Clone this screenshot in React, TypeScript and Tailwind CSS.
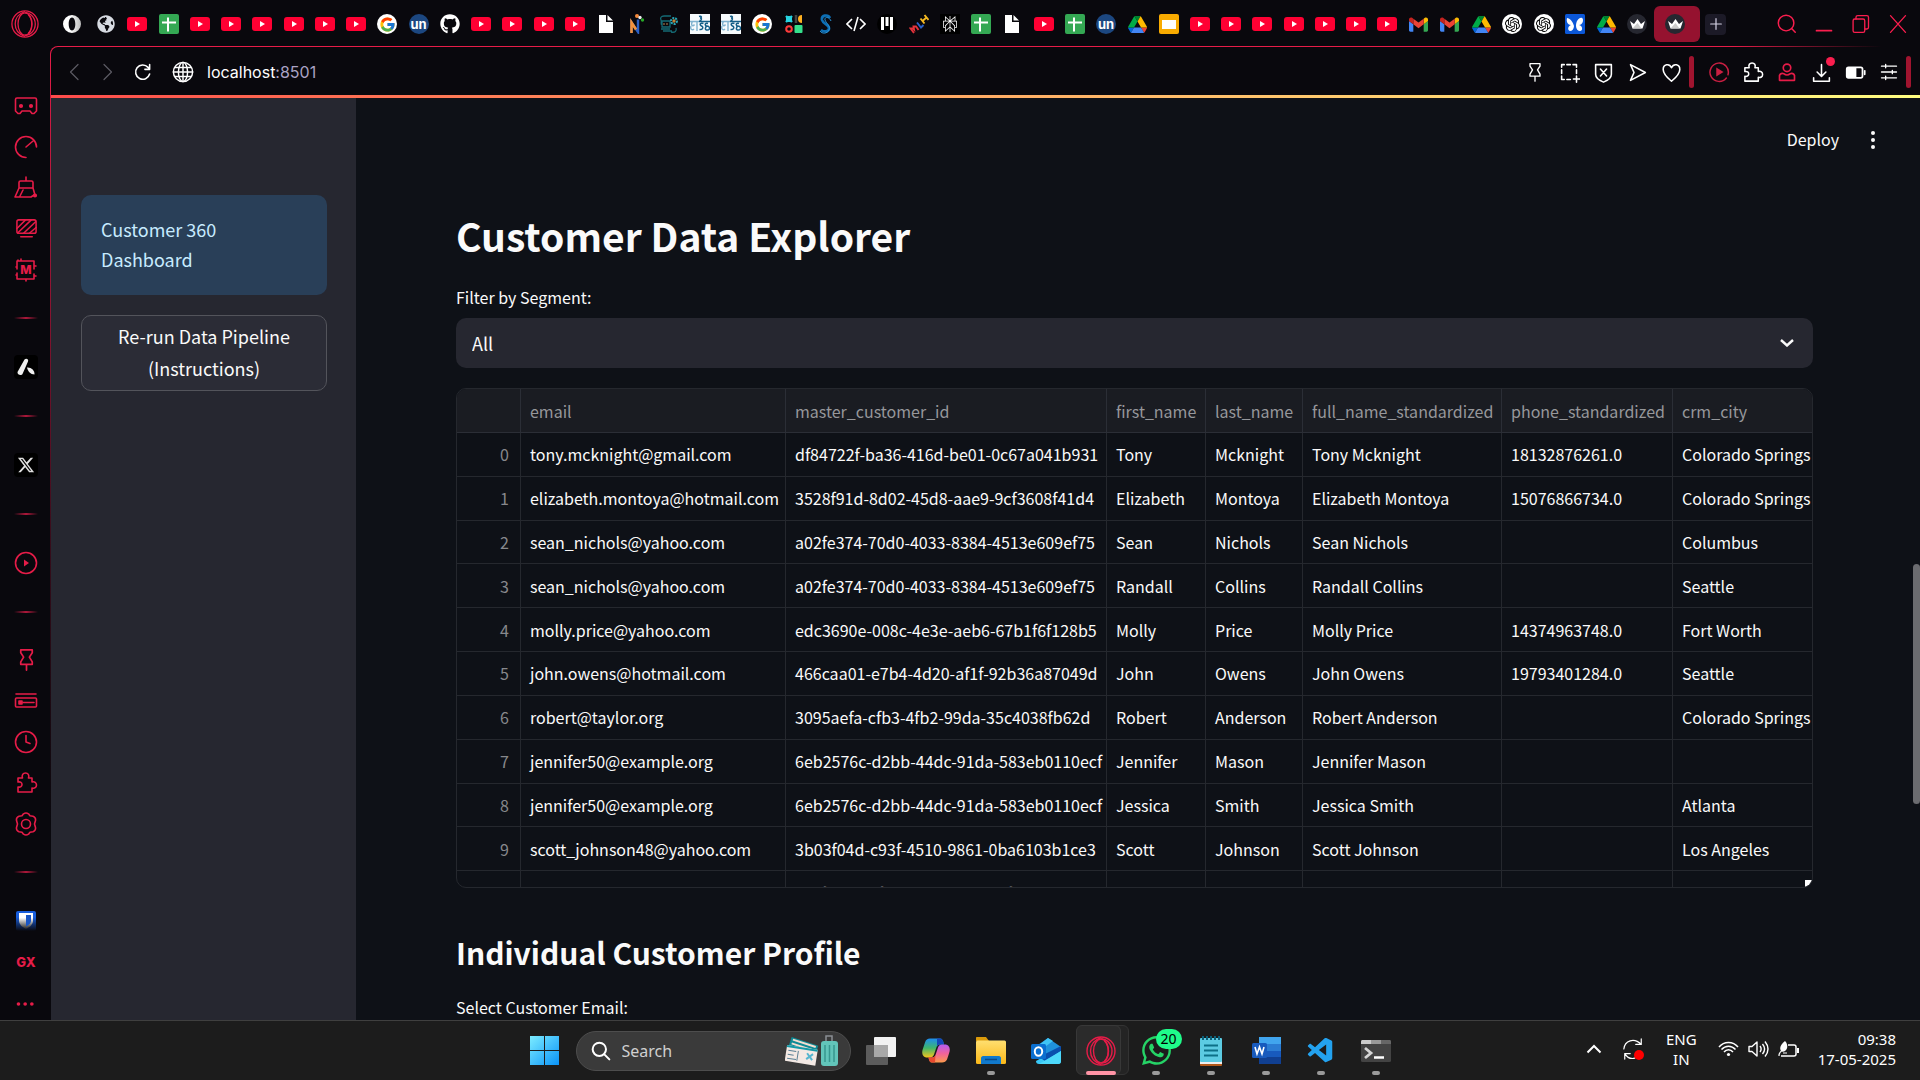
import React from "react";
import { FcGoogle } from "react-icons/fc";
import { FaGithub, FaGlobeAmericas, FaWhatsapp } from "react-icons/fa";
import { FaXTwitter } from "react-icons/fa6";
import { SiOpenai, SiPerplexity } from "react-icons/si";
import { VscVscode } from "react-icons/vsc";

type Kids = { children?: React.ReactNode };

/* ---------- drawing helpers ---------- */

function Line({ size = 22, w = 1.6, children }: Kids & { size?: number; w?: number }) {
  return (
    <svg width={size} height={size} viewBox="0 0 24 24" fill="none" stroke="currentColor" strokeWidth={w} strokeLinejoin="round" strokeLinecap="round" aria-hidden="true">
      {children}
    </svg>
  );
}

function OperaRing({ size }: { size: number }) {
  return (
    <svg width={size} height={size} viewBox="0 0 30 30" fill="none" stroke="#e61c48" strokeWidth="1.4" aria-hidden="true">
      <circle cx="15" cy="15" r="14" />
      <ellipse cx="15" cy="15" rx="7.5" ry="12" />
      <path d="M15 1.6C8 4 4.500 9 4.500 15S8 26 15 28.400" />
      <path d="M18.500 5c5 4.500 5 15.500 0 20" />
      <path d="M15 3c4-1 11 4 11 12s-7 13-11 12" />
    </svg>
  );
}

/* ---------- favicons ---------- */

function YouTube() {
  return (
    <svg width="20" height="14" viewBox="0 0 20 14" aria-hidden="true">
      <rect width="20" height="14" rx="3" fill="#ff0033" />
      <path d="M8 4l5 3-5 3z" fill="#fff" />
    </svg>
  );
}

function Sheets() {
  return (
    <svg width="20" height="20" viewBox="0 0 20 20" aria-hidden="true">
      <rect width="20" height="20" rx="2" fill="#34a853" />
      <path d="M3 8.500h14M9 3.500v14" stroke="#fff" strokeWidth="2" />
    </svg>
  );
}

function Google() {
  return (
    <span className="flex size-5 items-center justify-center rounded-full bg-white">
      <FcGoogle size={17} />
    </span>
  );
}

function Un() {
  return (
    <span className="flex size-5 items-center justify-center rounded-full bg-[#1c4780] font-[Inter,sans-serif] text-[13px] leading-4 font-bold text-white">
      un
    </span>
  );
}

function Doc() {
  return (
    <svg width="14" height="18" viewBox="0 0 14 18" fill="#fff" aria-hidden="true">
      <path d="M0 0h7v7h7v11H0zM8.500 0L14 5.500H8.500z" />
    </svg>
  );
}

function Drive() {
  return (
    <svg width="19" height="17" viewBox="0 0 87 78" aria-hidden="true">
      <path d="M6.600 66.850l3.850 6.650c.8 1.400 1.950 2.500 3.300 3.300L27.500 53H0c0 1.550.4 3.100 1.200 4.500z" fill="#0066da" />
      <path d="M43.650 25L29.900 1.200c-1.350.8-2.500 1.900-3.300 3.300l-25.400 44A9 9 0 0 0 0 53h27.500z" fill="#00ac47" />
      <path d="M73.550 76.800c1.350-.8 2.500-1.900 3.300-3.300l1.600-2.750L86.100 57.500c.8-1.400 1.200-2.950 1.200-4.500H59.800l5.850 11.500z" fill="#ea4335" />
      <path d="M43.650 25L57.400 1.200C56.050.4 54.500 0 52.900 0H34.400c-1.600 0-3.150.45-4.500 1.200z" fill="#00832d" />
      <path d="M59.800 53H27.500L13.750 76.800c1.350.8 2.900 1.200 4.500 1.200h50.800c1.600 0 3.150-.45 4.500-1.200z" fill="#4285f4" />
      <path d="M73.400 26.500l-12.700-22c-.8-1.400-1.950-2.500-3.300-3.300L43.650 25 59.800 53h27.450c0-1.550-.4-3.100-1.200-4.500z" fill="#ffba00" />
    </svg>
  );
}

function Gmail() {
  return (
    <svg width="19" height="15" viewBox="52 42 88 66" aria-hidden="true">
      <path fill="#4285f4" d="M58 108h14V74L52 59v43c0 3.300 2.700 6 6 6" />
      <path fill="#34a853" d="M120 108h14c3.300 0 6-2.700 6-6V59l-20 15" />
      <path fill="#fbbc04" d="M120 48v26l20-15v-8c0-7.400-8.500-11.600-14.400-7.200" />
      <path fill="#ea4335" d="M72 74V48l24 18 24-18v26L96 92" />
      <path fill="#c5221f" d="M52 51v8l20 15V48l-5.600-4.200C60.500 39.400 52 43.600 52 51" />
    </svg>
  );
}

function Slides() {
  return (
    <svg width="20" height="20" viewBox="0 0 20 20" aria-hidden="true">
      <rect width="20" height="20" rx="2" fill="#f9ab00" />
      <rect x="3" y="6" width="14" height="9" fill="#fff" />
    </svg>
  );
}

function OperaO() {
  return (
    <svg width="18" height="18" viewBox="0 0 18 18" aria-hidden="true">
      <defs>
        <linearGradient id="oo" x1="0" x2="1">
          <stop offset=".4" stopColor="#fff" />
          <stop offset="1" stopColor="#bbb" />
        </linearGradient>
      </defs>
      <path fillRule="evenodd" fill="url(#oo)" d="M9 0a9 9 0 1 0 0 18A9 9 0 0 0 9 0zm0 2.500c2.200 0 3.300 3 3.300 6.500s-1.100 6.500-3.300 6.500S5.700 12.500 5.700 9 6.800 2.500 9 2.500z" />
    </svg>
  );
}

function NLogo() {
  return (
    <svg width="16" height="20" viewBox="0 0 16 20" aria-hidden="true">
      <path d="M2.500 19V8.500L9 18V5.500" stroke="#2a5fc4" strokeWidth="2.400" fill="none" />
      <path d="M2.500 19V8.500l4.500 7" stroke="#f2923c" strokeWidth="2.600" fill="none" />
      <circle cx="8" cy="2" r="2" fill="#f58a3c" />
      <circle cx="11" cy="3.500" r="1.700" fill="#eee" />
      <circle cx="13.500" cy="6" r="1.700" fill="#27a827" />
    </svg>
  );
}

function Robot() {
  return (
    <svg width="20" height="20" viewBox="0 0 20 20" fill="none" stroke="#156a74" strokeWidth="1.300" aria-hidden="true">
      <path d="M12 2H5C2 2 1 4 2 6s-1 4 1 5M3 7h8v6H3zM2 15h9M4 17h9M12 18c4 1 6-1 5-4" />
      <circle cx="15" cy="7" r="3" stroke="#28a8b8" strokeDasharray="2 1" strokeWidth="2" />
      <circle cx="15" cy="7" r="1" stroke="#c98b3d" />
      <path d="M5 9v2M8 9v2" stroke="#8b6b45" />
    </svg>
  );
}

function SeDha() {
  return (
    <svg width="20" height="20" viewBox="0 0 20 20" fill="none" aria-hidden="true">
      <rect width="20" height="20" fill="#f6fafc" />
      <path d="M0 7.500h9M2.500 7.500c-2 3 0 6 2 3M7 7.500V17M1 12c-1 3 1 5 3 3" stroke="#7fb2cf" strokeWidth="1.400" />
      <path d="M9 7.500h11M13.500 9.500c-3-1-4.500 1-2 2.500 2.500 1 1 4-2 3.500M18 9.500c-3.500-1-3.500 2.500-1 2.500M17 12c3 0 3.500 4 .5 4s-2.500-3-.5-4M9 2.500c3-1 3 1.500 1 1.500 2 0 2 2.500-.5 2.500" stroke="#155f88" strokeWidth="1.500" />
    </svg>
  );
}

function Shapes() {
  return (
    <svg width="18" height="18" viewBox="0 0 18 18" aria-hidden="true">
      <path d="M1 1l6 6M7 1L1 7M4 1v6M1 4h6" stroke="#27d3e0" strokeWidth="2.400" />
      <path d="M11 0v8" stroke="#444" strokeWidth="2.500" />
      <path d="M17 0a4 4 0 0 0 0 8z" fill="#ffb020" />
      <circle cx="4" cy="14" r="2.800" fill="none" stroke="#ff3b3b" strokeWidth="2" />
      <rect x="9.500" y="10" width="8" height="8" rx="1" fill="#35e08c" />
    </svg>
  );
}

function SLogo() {
  return (
    <svg width="16" height="20" viewBox="0 0 16 20" fill="none" stroke="#0d6fb5" aria-hidden="true">
      <path d="M13 4C11 0 4 1 5 6c1 4 8 5 7 9-1 3-5 3-8 1" strokeWidth="2.600" />
      <path d="M14 7C12 2 7 3 8 6c1 3 6 6 4 10-2 4-7 4-9 1" strokeWidth="1" stroke="#2b93d6" />
    </svg>
  );
}

function Code() {
  return (
    <svg width="20" height="16" viewBox="0 0 20 16" fill="none" stroke="#fff" strokeWidth="1.600" aria-hidden="true">
      <path d="M6 3L1 8l5 5M14 3l5 5-5 5M12 1L8 15" />
    </svg>
  );
}

function Bars() {
  return (
    <span className="flex size-5 items-center justify-center rounded-full bg-black">
      <svg width="12" height="14" viewBox="0 0 12 14" fill="#fff" aria-hidden="true">
        <path d="M0 0h3v13H0zM4.500 0h3v9h-3zM9 0h3v13H9z" />
      </svg>
    </span>
  );
}

function Mlh() {
  return (
    <svg width="20" height="20" viewBox="0 0 20 20" fill="none" strokeWidth="1.900" aria-hidden="true">
      <path d="M5 19l-3.500-4.500L4 14.500l1 1-.5-3 2.500 0 2.500 3.500" stroke="#e5323b" />
      <path d="M8 8.500l4 5 2.500-2.500" stroke="#2a62c9" />
      <path d="M11.500 4.500l4 5M15.500 1l4 5M13.500 7l4-3.500" stroke="#f5b921" />
    </svg>
  );
}

function Perplexity() {
  return (
    <span className="flex size-5 items-center justify-center bg-black text-white">
      <SiPerplexity size={16} />
    </span>
  );
}

function OpenAi() {
  return (
    <span className="flex size-5 items-center justify-center rounded-full bg-white text-black">
      <SiOpenai size={15} />
    </span>
  );
}

function Butterfly() {
  return (
    <svg width="20" height="20" viewBox="0 0 20 20" aria-hidden="true">
      <rect width="20" height="20" rx="1.500" fill="#0b57d8" />
      <path d="M9 12C8 8 5 4 2 4c-1 4 1 7 4 7-3 1-4 5-1 6 2 0 4-2 4-5zM11 12c0-5 3-9 6-8 2 1 1 7-3 7 4 1 4 6 1 6-2 0-4-2-4-5z" fill="#fff" />
    </svg>
  );
}

function Crown() {
  return (
    <span className="flex size-5 items-center justify-center rounded-full bg-[#262730]">
      <svg width="15" height="10" viewBox="0 0 15 10" aria-hidden="true">
        <path d="M0 2l4 3 3.500-5L11 5l4-3-2.500 7.500h-10z" fill="#fff" />
        <path d="M7.500 4l4 5.500h-9z" fill="#ccc" />
      </svg>
    </span>
  );
}

const favicons: Record<string, () => React.ReactElement> = {
  y: YouTube,
  s: Sheets,
  g: Google,
  u: Un,
  d: Doc,
  D: Drive,
  m: Gmail,
  l: Slides,
  G: () => <FaGlobeAmericas size={18} color="#d7dbe2" />,
  h: () => <FaGithub size={20} color="#fff" />,
  n: NLogo,
  r: Robot,
  e: SeDha,
  k: Shapes,
  S: SLogo,
  c: Code,
  b: Bars,
  M: Mlh,
  p: Perplexity,
  o: OpenAi,
  B: Butterfly,
  C: Crown,
};

const tabOrder = "GysyyyyyyguhyyyydnreegkScbMpsdysuDlyyyyyyymmDooBDC";

function TabBar() {
  return (
    <header className="flex h-[46px] shrink-0 items-center pt-0.5 text-[#fa1e4e]">
      <button aria-label="Opera menu" className="flex w-[50px] justify-center">
        <OperaRing size={28} />
      </button>
      <nav aria-label="Tabs" className="flex min-w-0 flex-1 items-center pl-3">
        <button aria-label="Start page" className="flex w-5 justify-center">
          <OperaO />
        </button>
        <div className="ml-[14px] flex min-w-0 flex-1 items-center justify-between">
          {tabOrder.split("").map((k, i) => {
            const Icon = favicons[k];
            return (
              <button key={i} aria-label={`Tab ${i + 1}`} className="flex h-9 w-5 items-center justify-center">
                <Icon />
              </button>
            );
          })}
        </div>
        <button aria-label="Active tab" className="ml-[6px] flex h-9 w-[46px] items-center rounded-md bg-[#95122f] pl-[11px]">
          <Crown />
        </button>
        <button aria-label="New tab" className="ml-[5px] flex h-[21px] w-[21px] items-center justify-center rounded bg-[#1c1a27] text-[#d6d3e6]">
          <Line size={16} w={1.8}><path d="M12 4v16M4 12h16" /></Line>
        </button>
      </nav>
      <div className="ml-[43px] flex items-center pr-1">
        <button aria-label="Search tabs" className="flex w-[36px] justify-center"><Line size={22}><circle cx="11" cy="11" r="8.500" /><path d="M17 17l4 4" /></Line></button>
        <button aria-label="Minimise" className="flex w-[37px] justify-center"><Line size={20} w={2}><path d="M3 20h18" /></Line></button>
        <button aria-label="Restore" className="flex w-[37px] justify-center"><Line size={20}><rect x="2.500" y="6" width="14" height="16" rx="2" /><path d="M6 6V4c0-1 1-2 2-2h11c1 0 2 1 2 2v12c0 1-1 2-2 2h-2" /></Line></button>
        <button aria-label="Close" className="flex w-[37px] justify-center"><Line size={20}><path d="M3 2l18 20M21 2L3 22" /></Line></button>
      </div>
    </header>
  );
}

const puzzle = "M4 7h4.500c-1-3 .5-5 3-5s4 2 3 5H18v4c2.500-.8 4.500.6 4.500 3s-2 3.800-4.500 3v4H4v-5c2.500.6 4-.8 4-2.500S6.500 10.500 4 11z";
const pin = "M6 2h12v3l-3 4.500 3 5V17H6v-2.500l3-5L6 5zM12 17v6";

function ToolBar() {
  const cell = "flex w-[34px] justify-center";
  return (
    <div className="flex h-12 shrink-0 items-center pt-0.5">
      <div className="flex items-center pl-2 text-[#5c5a63]">
        <button aria-label="Back" className="flex w-8 justify-center"><Line size={18}><path d="M16 2L6 12l10 10" /></Line></button>
        <button aria-label="Forward" className="flex w-8 justify-center"><Line size={18}><path d="M8 2l10 10L8 22" /></Line></button>
        <button aria-label="Reload" className="flex w-[38px] justify-center text-white"><Line size={19} w={2}><path d="M21 14a9 9 0 1 1-2-8.500L21 8M21 2v6h-6" /></Line></button>
      </div>
      <div className="flex min-w-0 flex-1 items-center">
        <button aria-label="Site information" className="ml-[11px] text-white">
          <Line size={22} w={1.600}><circle cx="12" cy="12" r="10.500" /><ellipse cx="12" cy="12" rx="5" ry="10.500" /><path d="M12 1.500v21M1.500 12h21M3 7h18M3 17h18" /></Line>
        </button>
        <a href="http://localhost:8501" className="ml-[13px] font-[Inter,sans-serif] text-base leading-6 text-white">
          localhost<span className="text-[#aaa2c4]">:8501</span>
        </a>
      </div>
      <div className="flex items-center text-white">
        <button aria-label="Pin" className={cell}><Line size={20}><path d={pin} /></Line></button>
        <button aria-label="Snapshot" className={cell}><Line size={21} w={1.800}><path d="M3 6V3h3M9 3h4M16 3h4v3M20 9v4M3 9v4M3 16v4h3M9 20h4M20 16v7M16.500 19.500h7" /></Line></button>
        <button aria-label="Shield" className={cell}><Line size={21} w={1.800}><path d="M3 3h18v11c0 4-4 7-9 9-5-2-9-5-9-9zM8.500 8l7 8M15.500 8l-7 8" /></Line></button>
        <button aria-label="Send" className={cell}><Line size={21} w={1.800}><path d="M4 3l17 9L4 21l4-9z" /></Line></button>
        <button aria-label="Favourite" className={cell}><Line size={21} w={1.800}><path d="M12 22C6 17 2.500 13.500 2.500 8.500 2.500 2.500 9.500 1 12 6.500 14.500 1 21.500 2.500 21.500 8.500 21.500 13.500 18 17 12 22z" /></Line></button>
        <span className="ml-px h-8 w-[5px] rounded-full bg-[#a0142f]" />
        <div className="ml-2 flex items-center">
          <button aria-label="Player" className={`${cell} text-[#c91f42]`}><Line size={22}><path d="M20 18.500a10 10 0 1 1 1.800-3.500" /><path d="M9 7l8 5-8 5z" fill="currentColor" stroke="none" /></Line></button>
          <button aria-label="Extensions" className={cell}><Line size={23}><path d={puzzle} transform="translate(-1)" /></Line></button>
          <button aria-label="Profile" className={`${cell} text-[#e61c48]`}><Line size={20} w={2}><circle cx="12" cy="7" r="4.500" /><path d="M3 22v-6c1-2 3-3 5-2 2.500 2 5.500 2 8 0 2-1 4 0 5 2v6z" /></Line></button>
          <button aria-label="Downloads" className={`${cell} relative`}>
            <Line size={21} w={1.800}><path d="M12 3v13M7 11.500l5 5 5-5M3 18v4h18v-4" /></Line>
            <span className="absolute -top-[5px] right-[3px] size-[9px] rounded-full bg-[#fa1e4e]" />
          </button>
          <button aria-label="Battery saver" className={cell}><Line size={21} w={2}><rect x="2" y="6" width="18" height="12" rx="2" /><path d="M3 7h9v10H3z" fill="currentColor" /><path d="M22.500 10v4" /></Line></button>
          <button aria-label="Easy setup" className={cell}><Line size={20} w={1.600}><path d="M3 5h18M3 12h18M3 19h18M8 3v4M16 10v4M8 17v4" /></Line></button>
        </div>
        <span className="h-8 w-[5px] rounded-full bg-[#a0142f]" />
        <span className="w-[9px]" />
      </div>
    </div>
  );
}

function RailButton({ label, tall, children }: Kids & { label: string; tall?: boolean }) {
  return (
    <button aria-label={label} className={`flex w-full shrink-0 items-center justify-center pl-[2px] ${tall ? "h-[43px]" : "h-[41px]"}`}>
      {children}
    </button>
  );
}

function RailRule() {
  return (
    <div className="flex h-[55px] w-full shrink-0 items-center justify-center pl-[2px]">
      <span className="h-0.5 w-6 bg-linear-to-r from-transparent via-[#b0183b] to-transparent" />
    </div>
  );
}

function Rail() {
  return (
    <aside aria-label="Browser sidebar" className="flex w-[50px] shrink-0 flex-col items-center pt-[39px] text-[#e61c48]">
      <RailButton label="Mods"><Line size={24}><path d="M1.500 5.500c0-1 .5-1.500 1.500-1.500h18c1 0 1.500.5 1.500 1.500V17l-2.500 2.500h-2L16 17H8l-2 2.500H4L1.500 17z" /><circle cx="7" cy="12" r="1.300" fill="currentColor" /><circle cx="17" cy="12" r="1.300" fill="currentColor" /></Line></RailButton>
      <RailButton label="Speed"><Line size={24}><path d="M12 22.500A10.500 10.500 0 1 1 22.500 12M12 12l7-6" /></Line></RailButton>
      <RailButton label="Cleaner"><Line size={24}><path d="M12 1v4M5 12V6.500C5 5.500 5.500 5 6.500 5h11c1 0 1.500.5 1.500 1.500V12M5 12h14l2 7M5 12L1 21h16l3-2M9 14l-3 6" /><circle cx="21" cy="19.500" r="1.300" fill="currentColor" /></Line></RailButton>
      <RailButton label="Shaders"><Line size={23}><rect x="2" y="3" width="20" height="14" rx="2" /><path d="M2 12l9-9M3 16.500L17 3M9 17L21.500 5M15 17l7-6M6 20.500h12" /></Line></RailButton>
      <RailButton label="Messenger">
        <span className="relative flex items-center justify-center">
          <Line size={24}><path d="M4 2v1h16v8M20 16v5H3V15M3 11V3M7 3V1M12 21v2M2 9h1M2 17h1M20 8h2M20 18h2" /></Line>
          <span className="absolute font-[Inter,sans-serif] text-xs font-extrabold">M</span>
        </span>
      </RailButton>
      <RailRule />
      <RailButton label="Aria" tall>
        <span className="flex size-6 items-center justify-center rounded bg-black">
          <svg width="18" height="18" viewBox="0 0 18 18" fill="#f0f0f0" aria-hidden="true"><path d="M7.500 1.500c1.500-1.500 4.500-.5 3.500 2L5.500 16C4.500 18 0 17 .5 14zM10 9.500c4-.5 8 3 7.500 7-4 0-6.500-3-7.500-7z" /></svg>
        </span>
      </RailButton>
      <RailRule />
      <RailButton label="X" tall>
        <span className="flex size-6 items-center justify-center rounded bg-black text-[#e0e0e0]"><FaXTwitter size={18} /></span>
      </RailButton>
      <RailRule />
      <RailButton label="Player" tall><Line size={24}><circle cx="12" cy="12" r="10.500" /><path d="M10 8.500l5 3.500-5 3.500z" fill="currentColor" stroke="none" /></Line></RailButton>
      <RailRule />
      <RailButton label="Pinboards"><Line size={23} w={1.800}><path d={pin} /></Line></RailButton>
      <RailButton label="Tab islands"><Line size={24}><rect x="1.500" y="9" width="21" height="9" rx="1" /><path d="M2 5h20M9 13.500h11" /><path d="M5 12h3v3H5z" fill="currentColor" /></Line></RailButton>
      <RailButton label="History"><Line size={24}><circle cx="12" cy="12" r="10.500" /><path d="M12 5.500V12l4 1.500" /></Line></RailButton>
      <RailButton label="Extensions"><Line size={24}><path d={puzzle} /></Line></RailButton>
      <RailButton label="Settings"><Line size={24}><circle cx="12" cy="12" r="4.500" /><path d="M9.500 1.800c1.500-1 3.500-1 5 0l1.500 2 3 .4c2 .8 2.800 2.300 2.500 4.300L20.500 12l1 3.500c.3 2-.5 3.500-2.500 4.300l-3 .4-1.500 2c-1.500 1-3.500 1-5 0l-1.500-2-3-.4c-2-.8-2.800-2.300-2.500-4.300l1-3.500-1-3.500C2.200 6.500 3 5 5 4.200l3-.4z" /></Line></RailButton>
      <RailRule />
      <RailButton label="Bitwarden" tall>
        <svg width="20" height="20" viewBox="0 0 20 20" aria-hidden="true">
          <defs>
            <linearGradient id="bw" x1="0" y1="0" x2="0" y2="1"><stop offset=".3" stopColor="#175ddc" /><stop offset="1" stopColor="#09080d" /></linearGradient>
            <linearGradient id="bs" x1="0" y1="0" x2="0" y2="1"><stop offset=".3" stopColor="#fff" /><stop offset="1" stopColor="#222" /></linearGradient>
          </defs>
          <rect width="20" height="20" rx="2" fill="url(#bw)" />
          <path d="M3 2h14v8c0 3-3 6-7 8-4-2-7-5-7-8z" fill="url(#bs)" />
          <path d="M10 4h5v6c0 2-2 4-5 5.500z" fill="#1a56c4" />
        </svg>
      </RailButton>
      <RailButton label="GX Corner"><span className="font-[Inter,sans-serif] text-[13px] font-extrabold">GX</span></RailButton>
      <RailButton label="More"><Line size={20} w={0}><g fill="currentColor"><circle cx="3" cy="12" r="2.200" /><circle cx="11" cy="12" r="2.200" /><circle cx="19" cy="12" r="2.200" /></g></Line></RailButton>
    </aside>
  );
}

/* ---------- Streamlit page ---------- */

const columns = [
  { name: "email", w: "w-[265px]" },
  { name: "master_customer_id", w: "w-[321px]" },
  { name: "first_name", w: "w-[99px]" },
  { name: "last_name", w: "w-[97px]" },
  { name: "full_name_standardized", w: "w-[199px]" },
  { name: "phone_standardized", w: "w-[171px]" },
  { name: "crm_city", w: "w-auto" },
];

const rows = [
  ["tony.mcknight@gmail.com", "df84722f-ba36-416d-be01-0c67a041b931", "Tony", "Mcknight", "Tony Mcknight", "18132876261.0", "Colorado Springs"],
  ["elizabeth.montoya@hotmail.com", "3528f91d-8d02-45d8-aae9-9cf3608f41d4", "Elizabeth", "Montoya", "Elizabeth Montoya", "15076866734.0", "Colorado Springs"],
  ["sean_nichols@yahoo.com", "a02fe374-70d0-4033-8384-4513e609ef75", "Sean", "Nichols", "Sean Nichols", "", "Columbus"],
  ["sean_nichols@yahoo.com", "a02fe374-70d0-4033-8384-4513e609ef75", "Randall", "Collins", "Randall Collins", "", "Seattle"],
  ["molly.price@yahoo.com", "edc3690e-008c-4e3e-aeb6-67b1f6f128b5", "Molly", "Price", "Molly Price", "14374963748.0", "Fort Worth"],
  ["john.owens@hotmail.com", "466caa01-e7b4-4d20-af1f-92b36a87049d", "John", "Owens", "John Owens", "19793401284.0", "Seattle"],
  ["robert@taylor.org", "3095aefa-cfb3-4fb2-99da-35c4038fb62d", "Robert", "Anderson", "Robert Anderson", "", "Colorado Springs"],
  ["jennifer50@example.org", "6eb2576c-d2bb-44dc-91da-583eb0110ecf", "Jennifer", "Mason", "Jennifer Mason", "", ""],
  ["jennifer50@example.org", "6eb2576c-d2bb-44dc-91da-583eb0110ecf", "Jessica", "Smith", "Jessica Smith", "", "Atlanta"],
  ["scott_johnson48@yahoo.com", "3b03f04d-c93f-4510-9861-0ba6103b1ce3", "Scott", "Johnson", "Scott Johnson", "", "Los Angeles"],
  ["rosakramerd@gmail.com", "ce7f41db-9fe6-42a7-bc09-08f57c6e1a24", "Susan", "Baker", "Susan Baker", "", "Tacoma"],
];

function DataGrid() {
  return (
    <div className="relative h-[500px] overflow-hidden rounded-[10px] border border-[#25282e]">
      <table className="h-[526px] w-full table-fixed border-separate border-spacing-0 text-left text-base leading-6 whitespace-nowrap">
        <thead>
          <tr className="h-11 bg-[#1a1c22] text-[#96979b]">
            <th scope="col" aria-label="Row" className="w-16 border-r border-b border-[#2b2e36]" />
            {columns.map((c) => (
              <th key={c.name} scope="col" className={`${c.w} border-r border-b border-[#2b2e36] pl-[9px] font-normal last:border-r-0`}>
                {c.name}
              </th>
            ))}
          </tr>
        </thead>
        <tbody>
          {rows.map((r, i) => (
            <tr key={i}>
              <td className="border-r border-b border-[#25282e] pr-[11px] text-right text-[#87888c]">{i}</td>
              {r.map((v, j) => (
                <td key={j} className="border-r border-b border-[#25282e] pl-[9px] last:border-r-0">{v}</td>
              ))}
            </tr>
          ))}
        </tbody>
      </table>
      <span className="absolute right-0 bottom-0 size-[7px] rounded-br-md bg-white" />
    </div>
  );
}

function Page() {
  return (
    <div className="flex min-h-0 flex-1 bg-[#0e1117] font-['Noto_Sans_CJK_SC',sans-serif] text-[#fafafa]">
      <aside className="w-[305px] shrink-0 bg-[#262730] pt-[97px] pr-[29px] pl-[30px]">
        <div className="rounded-[10px] bg-[#293f58] px-5 pt-[19px] pb-[21px] text-lg leading-[30px] text-[#c7ebff]">
          Customer 360
          <br />
          Dashboard
        </div>
        <button className="mt-5 w-full rounded-[10px] border border-[#53545b] bg-[#2b2c36] px-5 pt-1 pb-[6px] text-lg leading-8">
          Re-run Data Pipeline (Instructions)
        </button>
      </aside>
      <main className="relative min-w-0 flex-1 overflow-hidden">
        <div className="flex items-center justify-end gap-[30px] pt-[26px] pr-[43px]">
          <button className="pb-0.5 text-base leading-[30px]">Deploy</button>
          <button aria-label="Main menu">
            <svg width="8" height="18" viewBox="0 0 8 18" fill="#fafafa" aria-hidden="true"><circle cx="4" cy="2" r="2" /><circle cx="4" cy="9" r="2" /><circle cx="4" cy="16" r="2" /></svg>
          </button>
        </div>
        <div className="pt-[55px] pr-[107px] pl-[100px]">
          <h2 className="text-[39px] leading-[48px] font-bold">Customer Data Explorer</h2>
          <label htmlFor="segment" className="mt-6 block text-base leading-7">Filter by Segment:</label>
          <div className="relative mt-[7px]">
            <select id="segment" className="h-[50px] w-full appearance-none rounded-[10px] bg-[#262730] px-4 text-lg text-[#fafafa]">
              <option>All</option>
            </select>
            <span className="pointer-events-none absolute inset-y-0 right-[19px] flex items-center">
              <svg width="14" height="8" viewBox="0 0 14 8" fill="none" stroke="#fafafa" strokeWidth="2.400" aria-hidden="true"><path d="M1 1l6 5.500L13 1" /></svg>
            </span>
          </div>
          <div className="mt-5">
            <DataGrid />
          </div>
          <h3 className="mt-[42px] text-[30px] leading-[44px] font-bold">Individual Customer Profile</h3>
          <p className="mt-[19px] text-base leading-7">Select Customer Email:</p>
        </div>
        <span className="absolute top-[466px] right-0 h-[240px] w-[7px] rounded-full bg-[#6b6c70]" />
      </main>
    </div>
  );
}

/* ---------- Windows taskbar ---------- */

function Task({ label, running, children }: Kids & { label: string; running?: boolean }) {
  return (
    <button aria-label={label} className="relative flex h-full w-[55px] items-center justify-center">
      {children}
      {running && <span className="absolute bottom-[5px] h-1 w-2 rounded-full bg-[#9a9a9a]" />}
    </button>
  );
}

function TaskBar() {
  return (
    <footer className="relative flex h-[60px] shrink-0 items-center justify-center border-t border-[#3f3f3f] bg-[#1c1c1c] font-['Noto_Sans',sans-serif] text-white">
      <div className="flex h-full items-center pl-[13px]">
        <button aria-label="Start" className="mr-[17px] flex items-center">
          <svg width="29" height="29" viewBox="0 0 29 29" aria-hidden="true">
            <defs><linearGradient id="win" gradientUnits="userSpaceOnUse" x1="0" y1="0" x2="29" y2="29"><stop stopColor="#7cecff" /><stop offset="1" stopColor="#0a93f8" /></linearGradient></defs>
            <path fill="url(#win)" d="M0 0h14v14H0zM15 0h14v14H15zM0 15h14v14H0zM15 15h14v14H15z" />
          </svg>
        </button>
        <label className="flex h-10 w-[275px] items-center rounded-full border border-[#4d4d4d] bg-[#3a3a3a] pr-[10px] pl-[14px]">
          <Line size={20} w={2.400}><circle cx="10" cy="10" r="8" /><path d="M16 16l6 6" /></Line>
          <input aria-label="Search" placeholder="Search" className="ml-[11px] min-w-0 flex-1 bg-transparent text-base leading-5 placeholder:text-[#d0d0d0]" />
          <svg width="55" height="34" viewBox="0 0 55 34" aria-hidden="true">
            <g transform="rotate(18 6 5)">
              <rect x="6" y="3" width="28" height="12" fill="#0e8b96" />
              <path d="M8 5h24M8 9h22" stroke="#f3ddd0" strokeWidth="2" />
            </g>
            <g transform="rotate(9 2 12)">
              <rect x="2" y="11" width="31" height="16" fill="#f3e9e4" />
              <path d="M2 12h31" stroke="#1398a6" strokeWidth="2" />
              <path d="M4 16h8M4 20h6M4 24h9M14 15v10" stroke="#5a7f94" />
              <path d="M23 16l6 6M29 16l-6 6" stroke="#56b6cf" strokeWidth="2" />
            </g>
            <path d="M41 7V2h6v5" fill="none" stroke="#8a8f94" strokeWidth="1.500" />
            <rect x="36" y="7" width="17" height="25" rx="3" fill="#62c5ba" />
            <path d="M40 11v17M44.500 11v17M49 11v17" stroke="#37978f" strokeWidth="1.500" />
          </svg>
        </label>
        <div className="ml-[3px] flex h-full items-center">
          <Task label="Task view">
            <svg width="30" height="28" viewBox="0 0 30 28" aria-hidden="true"><rect x="8" y="0" width="22" height="20" rx="1" fill="#f2f2f2" /><rect x="0" y="8" width="22" height="20" rx="1" fill="#5c5c5c" /><rect x="8" y="8" width="14" height="12" fill="#a8a8a8" /></svg>
          </Task>
          <Task label="Copilot">
            <svg width="28" height="27" viewBox="0 0 28 26" aria-hidden="true">
              <defs>
                <linearGradient id="c1" x1="0" y1="0" x2="0" y2="1"><stop stopColor="#1d8df0" /><stop offset=".5" stopColor="#3fb66c" /><stop offset="1" stopColor="#f5c51b" /></linearGradient>
                <linearGradient id="c2" x1="0" y1="0" x2="0" y2="1"><stop stopColor="#b45cf2" /><stop offset=".5" stopColor="#f0629b" /><stop offset="1" stopColor="#fb9a4a" /></linearGradient>
              </defs>
              <path d="M8 1h10c2 0 3 2 3.500 4l.5 2h-4c-2 0-3 1-4 4l-2 6c-.7 2-2 3-4 3H5c-4 0-6-4-4-9l2-6c1-3 2.500-4 5-4z" fill="url(#c1)" />
              <path d="M15 1h3c2 0 3 2 3.500 4l.5 2h-4c-1 0-2 .3-3 2z" fill="#1347b8" />
              <path d="M20 25H10c-2 0-3-2-3.500-5H10c2 0 3-1 4-4l2-6c.7-2 2-3 4-3h3c4 0 6 4 4 9l-2 6c-1 2-2.500 3-5 3z" fill="url(#c2)" />
              <path d="M13 25h-3c-2 0-3-2-3.500-5H10c1.500 0 2.500-.5 3.500-2.500z" fill="#e8492f" />
            </svg>
          </Task>
          <Task label="File Explorer" running>
            <svg width="30" height="30" viewBox="0 -1 30 30" aria-hidden="true">
              <defs><linearGradient id="fo" x1="0" y1="0" x2="0" y2="1"><stop stopColor="#ffdf70" /><stop offset="1" stopColor="#fbb818" /></linearGradient></defs>
              <path d="M0 1c0-.6.400-1 1-1h9l3 4H0z" fill="#dc9b0b" />
              <rect y="3.500" width="30" height="23.500" rx="1.500" fill="url(#fo)" />
              <path d="M5 27v-6c0-1 1-2 2-2h16c1 0 2 1 2 2v6z" fill="#1179cc" />
              <path d="M9 22.500h12" stroke="#0b4a88" strokeWidth="1.500" />
            </svg>
          </Task>
          <Task label="Outlook">
            <svg width="30" height="28" viewBox="0 0 30 28" aria-hidden="true">
              <path d="M4 10L17 1l13 9v5L17 22 4 14z" fill="#1f92dc" />
              <path d="M8 8l9-7 5 3-11 8z" fill="#3fc4f5" />
              <path d="M30 10v14c0 2-1 3-3 3H8c-2 0-3-1-3-3z" fill="#39c8f7" />
              <path d="M30 9v5L14 24l-6-4z" fill="#0a4fae" />
              <path d="M30 14v10c0 2-1 3-3 3H8z" fill="#4dd8fb" />
              <rect y="7" width="15" height="15" rx="1.500" fill="#0b6fd0" />
              <ellipse cx="7.500" cy="14.500" rx="3.700" ry="4.200" fill="none" stroke="#fff" strokeWidth="2" />
            </svg>
          </Task>
          <button aria-label="Opera GX" className="relative flex h-full w-[55px] items-center justify-center">
            <span className="absolute top-1 right-0 left-[10px] h-[50px] rounded-md border border-[#333] bg-[#242424]" />
            <span className="absolute top-1 left-[2px] h-[50px] w-[45px] rounded-md border border-[#383838] bg-[#2b2b2b]" />
            <span className="absolute left-3"><OperaRing size={30} /></span>
            <span className="absolute bottom-[5px] left-3 h-1 w-[30px] rounded-full bg-[#ff94a6]" />
          </button>
          <Task label="WhatsApp" running>
            <FaWhatsapp size={33} color="#25d366" />
            <span className="absolute top-2 right-0.5 flex h-5 w-[26px] items-center justify-center rounded-full bg-[#1ffb8a] text-sm leading-5 text-black">20</span>
          </Task>
          <Task label="Notepad" running>
            <svg width="22" height="30" viewBox="0 0 22 30" aria-hidden="true">
              <rect y="26" width="22" height="4" rx="1" fill="#b3591a" />
              <rect y="24" width="22" height="4" fill="#eee" />
              <rect y="2" width="22" height="24" rx="1" fill="#5ccbe2" />
              <path d="M3 0v4M7 0v4M11 0v4M15 0v4M19 0v4" stroke="#0b6079" strokeWidth="2" />
              <path d="M4 9.500h14M4 14.500h14M4 19.500h14" stroke="#0d7087" strokeWidth="1.800" />
            </svg>
          </Task>
          <Task label="Word" running>
            <svg width="29" height="27" viewBox="0 0 29 27" aria-hidden="true">
              <path d="M7 0h22v7H7z" fill="#41a5ee" /><path d="M7 7h22v7H7z" fill="#2b7cd3" /><path d="M7 14h22v6H7z" fill="#185abd" /><path d="M7 20h22v7H7z" fill="#103f91" />
              <rect y="6" width="15" height="15" rx="1.500" fill="#185abd" />
              <path d="M3 10l2 7 2.500-7 2.500 7 2-7" fill="none" stroke="#fff" strokeWidth="1.600" />
            </svg>
          </Task>
          <Task label="Visual Studio Code" running>
            <VscVscode size={30} color="#23a2ef" />
          </Task>
          <Task label="Terminal" running>
            <svg width="30" height="22" viewBox="0 0 30 22" aria-hidden="true">
              <rect width="30" height="22" rx="1.500" fill="#434343" />
              <path d="M0 4V1.500C0 .7.700 0 1.500 0H10v4z" fill="#ccc" /><path d="M10 0h10v4H10z" fill="#999" /><path d="M20 0h8.500c.8 0 1.500.7 1.500 1.500V4H20z" fill="#666" />
              <path d="M4 8l6 5-6 5" fill="none" stroke="#d5d5d5" strokeWidth="2.800" />
              <path d="M13 17.500h10" stroke="#fff" strokeWidth="2.500" />
            </svg>
          </Task>
        </div>
      </div>
      <div className="absolute inset-y-0 right-[24px] flex items-center pb-[3px] text-[15px] leading-5">
        <button aria-label="Hidden icons" className="mr-5"><svg width="16" height="10" viewBox="0 0 16 10" fill="none" stroke="#fff" strokeWidth="2" aria-hidden="true"><path d="M1.500 8.500L8 2l6.500 6.500" /></svg></button>
        <button aria-label="Sync" className="relative mr-[22px]">
          <Line size={22} w={1.300}><path d="M2 12C3 3 13-1 21 7M21 1v6h-6M3 23v-6h6M3 17c3 5 7 6 11 5" /></Line>
          <span className="absolute right-0 bottom-0 size-[10px] rounded-full bg-[#f00]" />
        </button>
        <button className="mr-[21px] text-center">ENG<br />IN</button>
        <button aria-label="Quick settings" className="mr-[19px] flex items-center gap-[9px]">
          <svg width="21" height="16" viewBox="0 0 21 16" fill="none" stroke="#fff" strokeWidth="1.500" aria-hidden="true"><path d="M1 6c5-6 14-6 19 0M3.500 8.500c4-4.500 10-4.500 14 0M6 11c2.500-3 6.500-3 9 0" /><circle cx="10.500" cy="13.500" r="1.600" fill="#fff" stroke="none" /></svg>
          <svg width="21" height="18" viewBox="0 0 21 18" fill="none" stroke="#fff" strokeWidth="1.400" strokeLinejoin="round" aria-hidden="true"><path d="M1 6.500h3L9 2v14l-5-4.500H1zM12 6c1.500 2 1.500 4 0 6M14.500 4c2.500 3 2.500 7 0 10M17 1.500c4 5 4 10 0 15" /></svg>
          <svg width="21" height="17" viewBox="0 0 21 17" fill="none" stroke="#fff" strokeWidth="1.500" aria-hidden="true"><path d="M10 4h6c1.300 0 2 .7 2 2v7c0 1.300-.7 2-2 2H3" /><path d="M19 7h2v5h-2z" fill="#fff" stroke="none" /><path d="M7 0c3 3 3 8 0 10-1.500 1-3 1-4 0-2-3 0-7 4-10z" fill="#fff" stroke="none" /><path d="M1 15c0-3 2-5 4-6M5 12h4" strokeWidth="1.200" /></svg>
        </button>
        <button className="text-right">09:38<br />17-05-2025</button>
      </div>
    </footer>
  );
}

export default function App() {
  return (
    <div className="flex h-screen flex-col overflow-hidden bg-[#09080d]">
      <TabBar />
      <div className="flex min-h-0 flex-1">
        <Rail />
        <div className="flex min-w-0 flex-1 flex-col rounded-tl-lg pt-px pl-px [background:linear-gradient(to_right,#e61c48_0_90%,transparent_98%)_0_0/100%_8px_no-repeat,linear-gradient(to_bottom,#e61c48,#3a0d1c_50%,transparent_80%)_0_0/8px_100%_no-repeat]">
          <div className="flex min-h-0 flex-1 flex-col rounded-tl-[7px] bg-[#09080d]">
            <ToolBar />
            <div className="h-[3px] shrink-0 bg-linear-to-r from-[#ff4b4b] to-[#fffd80]" />
            <Page />
          </div>
        </div>
      </div>
      <TaskBar />
    </div>
  );
}
